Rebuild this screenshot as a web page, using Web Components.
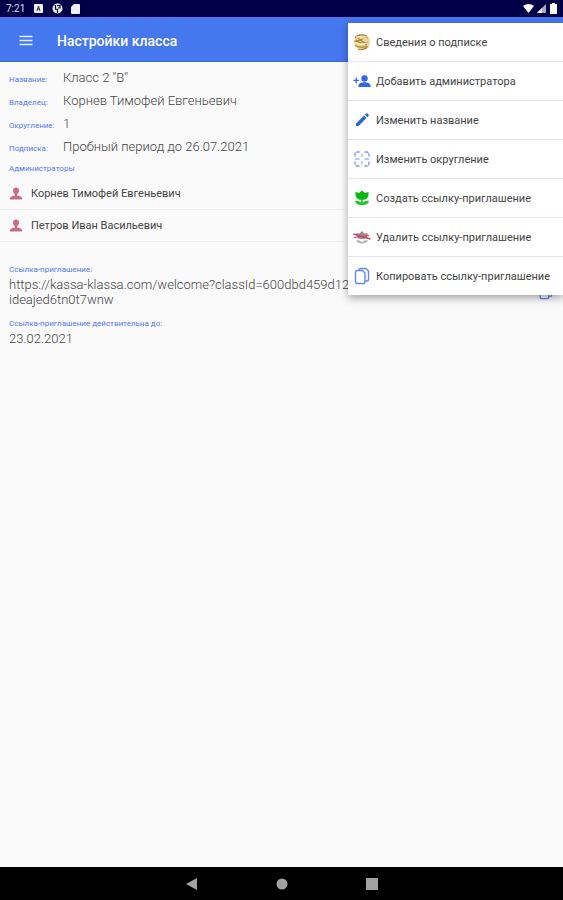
<!DOCTYPE html>
<html lang="ru">
<head>
<meta charset="utf-8">
<meta name="viewport" content="width=device-width, initial-scale=1">
<title>Настройки класса</title>
<style>
  html, body { height: 100%; }
  body { margin: 0; font-family: Roboto, "Noto Sans", sans-serif; background: #fafafa; color: #444; }
</style>
</head>
<body>
<class-settings></class-settings>
<script>
const icons = {
  user: '<svg viewBox="0 0 16 16" fill="#cc6b85"><path d="M8 1.500c1.800 0 3 1.300 3 3.100 0 1.600-.8 3-1.800 3.600v1.500H6.800V8.200C5.800 7.600 5 6.200 5 4.600 5 2.800 6.200 1.500 8 1.500zM2 13.500v-1.200c0-1.500 2.200-2.400 4.800-2.800h2.400c2.600.4 4.800 1.300 4.800 2.800v1.200z"/></svg>',
  gold: '<svg viewBox="0 0 18 18"><path d="M2 4q3-3 8-2.500L16 4l1 4-1 6-5 3-6-1-2-4-2-2z" fill="#ecd89d"/><path d="M2 5c4-5 9-3 12-2M1 8c5 2 9-5 14-3M3 7c5 6 8 1 13 4M2 12c5 5 10 0 13 2M5 16c4 2 7-1 9-1M5 5l9 7" fill="none" stroke="#b18632" stroke-width="1.300"/><path d="M2 9c5 4 9 0 14 2M3 4c4-1 6 2 11 1" fill="none" stroke="#fff6dc"/></svg>',
  add: '<svg viewBox="0 0 18 18" fill="#3467e4"><circle cx="11.500" cy="6.500" r="3.200"/><path d="M5.500 15v-1.500c0-2.200 3.500-3.200 6-3.200s6 1 6 3.200V15zM2.500 5.500h1.300v2.300H6v1.300H3.800v2.300H2.500V9.100H.5V7.800h2z"/></svg>',
  edit: '<svg viewBox="0 0 18 18" fill="#2865dc"><path d="M3 15v-2.500l8-8L13.500 7l-8 8zM11.800 3.700l1.200-1.200q.7-.6 1.400 0l1.100 1.100q.6.7 0 1.400l-1.200 1.200z"/></svg>',
  round: '<svg viewBox="0 0 18 18" fill="none" stroke="#7796ec" stroke-width="1.300"><path d="M2 6.500V4.500Q2 2 4.500 2h2M11.500 2h2Q16 2 16 4.500v2M16 11.500v2q0 2.500-2.500 2.500h-2M6.500 16h-2Q2 16 2 13.500v-2" stroke-dasharray="4 .7"/><path d="M9 3.500v3.500M9 11v3.500M2 9h4.500M11.500 9H16" stroke="#a3b8f3"/></svg>',
  tulip: '<svg viewBox="0 0 18 18"><path d="M2.500 3l3.500 1L9 1.500 12 4l3.500-1C16 8 14 11 9 11S2 8 2.500 3z" fill="#08b80d"/><path d="M8.200 10h1.600v4H8.200zM2 12c3-.5 5 .5 7 2.500 2-2 4-3 7-2.500-1 3-3 4-7 4s-6-1-7-4z" fill="#16c725"/></svg>',
  remove: '<svg viewBox="0 0 18 18"><path d="M3.500 5l3 .5L9 3l2.500 2.500 3-.5c.5 4-1 6-5.500 6S3 9 3.500 5z" fill="#a18b8d"/><path d="M3 12.500c3-.7 4 0 6 1.500 2-1.500 3-2.200 6-1.500-1 2-3 3-6 3s-5-1-6-3z" fill="#b5b5b5"/><path d="M.5 6l17 5" stroke="#cf4566" stroke-width="1.600"/><path d="M1 9.500l15-2" stroke="#cf4566"/></svg>',
  copy: '<svg viewBox="0 0 18 18" fill="none" stroke="#6488ec" stroke-width="1.400"><path d="M6 3.500V3q0-1.500 1.500-1.500H13l2.500 2.500v8.500q0 1.500-1.500 1.500h-2M2.500 5q0-1.500 1.500-1.500h5.500L12 6v9q0 1.500-1.500 1.500H4q-1.500 0-1.500-1.500z"/></svg>'
};

function define(name, markup) {
  customElements.define(name, class extends HTMLElement {
    constructor() {
      super();
      const root = this.attachShadow({ mode: 'open' });
      root.innerHTML = typeof markup === 'function' ? markup(this) : markup;
    }
  });
}

define('ui-icon', el => `<style>
  :host { display: inline-flex; flex: none; width: 18px; height: 18px; }
  svg { width: 100%; height: 100%; }
</style>${icons[el.getAttribute('name')] || ''}`);

define('status-bar', `<style>
  :host { display: flex; align-items: center; justify-content: space-between; box-sizing: border-box;
    height: 17px; padding: 0 5px 0 6px; background: #010046; color: #dcdcea; font-size: 10px; }
  div { display: flex; align-items: center; gap: 8px; }
  .right { gap: 2px; }
  svg { width: 11px; height: 11px; }
  svg.small { width: 9px; }
</style>
<div><span>7:21</span>
  <svg viewBox="0 0 11 11"><rect x="1" y="1" width="9" height="9" rx="1" fill="#eee"/><path d="M4 8l1.500-5L7 8M4 6h3" fill="none" stroke="#334"/></svg>
  <svg viewBox="0 0 11 11"><circle cx="5.500" cy="5.500" r="5" fill="#eee"/><path d="M3.500 2v4l2 .5V10M5 2.500h3V5H6" fill="none" stroke="#010046" stroke-width="1.200"/></svg>
  <svg class="small" viewBox="0 0 9 11"><path d="M3 1h5q1 0 1 1v8q0 1-1 1H1q-1 0-1-1V4z" fill="#eee"/></svg>
</div>
<div class="right">
  <svg viewBox="0 0 11 11"><path d="M0 3q5.500-4 11 0L5.500 10z" fill="#fff"/></svg>
  <svg viewBox="0 0 11 11"><path d="M1 10L10 1v9z" fill="#aaaac4"/><path d="M1 10l5-5v5z" fill="#fff"/></svg>
  <svg class="small" viewBox="0 0 9 11"><path d="M3 0h3v1h2v10H1V1h2z" fill="#fff"/></svg>
</div>`);

define('app-bar', `<style>
  :host { display: flex; align-items: center; gap: 22px; box-sizing: border-box; height: 45px;
    padding: 3px 17px 0; background: #4577ee; border-bottom: 1px solid #3c69df; color: #fff; }
  button { display: flex; width: 18px; height: 18px; padding: 0; border: 0; background: none; }
  svg { width: 18px; height: 18px; }
  h1 { margin: 0; font-size: 14px; line-height: 18px; font-weight: 500; }
</style>
<button aria-label="Меню"><svg viewBox="0 0 18 18" fill="none" stroke="#e8eefe" stroke-width="1.500"><path d="M2.500 4.500h13M2.500 8.500h13M2.500 12.500h13"/></svg></button>
<h1><slot></slot></h1>`);

define('info-row', `<style>
  :host { display: grid; grid-template-columns: 54px 1fr; align-items: baseline; height: 23px;
    line-height: 23px; font-size: 13px; font-weight: 300; }
  ::slotted([slot=label]) { color: #5578f2; font-size: 8px; font-weight: 400; }
</style><slot name="label"></slot><span><slot></slot></span>`);

define('info-block', `<style>
  :host { display: block; font-size: 13px; line-height: 15px; font-weight: 300; }
  .label { color: #5578f2; font-size: 8px; line-height: 14px; font-weight: 400; }
  .value { display: flex; align-items: center; justify-content: space-between; }
</style><div class="label"><slot name="label"></slot></div><div class="value"><slot></slot></div>`);

define('admin-row', `<style>
  :host { display: flex; align-items: center; gap: 7px; box-sizing: border-box; height: 32px; padding: 0 8px;
    border-bottom: 1px solid #eceef6; font-size: 11px; }
  ui-icon { width: 16px; height: 16px; }
</style><ui-icon name="user"></ui-icon><span><slot></slot></span>`);

define('menu-item', el => `<style>
  :host { display: block; }
  :host(:not(:last-child)) { border-bottom: 1px solid #e2e5f8; }
  button { display: flex; align-items: center; gap: 5px; width: 100%; height: 38px; padding: 0 13px 0 5px;
    border: 0; background: none; color: #444; font: inherit; text-align: left; white-space: nowrap; }
</style><button role="menuitem"><ui-icon name="${el.getAttribute('icon')}"></ui-icon><span><slot></slot></span></button>`);

define('popup-menu', `<style>
  :host { display: block; background: #fff; font-size: 11px; box-shadow: 0 3px 8px rgba(0,0,0,.35); }
</style><slot></slot>`);

define('nav-bar', `<style>
  :host { display: flex; align-items: center; justify-content: center; gap: 74px; height: 33px; background: #000; }
  button { display: flex; width: 16px; height: 16px; padding: 0; border: 0; background: none; }
  svg { width: 16px; height: 16px; fill: #a2a2a2; }
</style>
<button aria-label="Назад"><svg viewBox="0 0 16 16"><path d="M2 8l11-6v12z"/></svg></button>
<button aria-label="Домой"><svg viewBox="0 0 16 16"><circle cx="8" cy="8" r="5.500"/></svg></button>
<button aria-label="Недавние"><svg viewBox="0 0 16 16"><rect x="2" y="2" width="12" height="12" rx="1"/></svg></button>`);

define('class-settings', `<style>
  :host { display: flex; flex-direction: column; min-height: 100%; position: relative; }
  main { flex: 1; }
  .info { padding: 4px 9px 0; }
  .caption { padding: 2px 9px 0; color: #5578f2; font-size: 8px; line-height: 18px; }
  .links { display: grid; gap: 10px; padding: 21px 9px 0; }
  .copy { display: flex; width: 16px; height: 16px; padding: 0; border: 0; background: none; }
  .copy ui-icon { width: 16px; height: 16px; }
  popup-menu { position: absolute; top: 23px; right: 0; }
</style>
<status-bar></status-bar>
<app-bar>Настройки класса</app-bar>
<main>
  <section class="info">
    <info-row><span slot="label">Название:</span>Класс 2 "В"</info-row>
    <info-row><span slot="label">Владелец:</span>Корнев Тимофей Евгеньевич</info-row>
    <info-row><span slot="label">Округление:</span>1</info-row>
    <info-row><span slot="label">Подписка:</span>Пробный период до 26.07.2021</info-row>
  </section>
  <div class="caption">Администраторы</div>
  <section>
    <admin-row>Корнев Тимофей Евгеньевич</admin-row>
    <admin-row>Петров Иван Васильевич</admin-row>
  </section>
  <section class="links">
    <info-block><span slot="label">Ссылка-приглашение:</span>
      <span>https://kassa-klassa.com/welcome?classId=600dbd459d12<br>ideajed6tn0t7wnw</span>
      <button class="copy" aria-label="Копировать"><ui-icon name="copy"></ui-icon></button>
    </info-block>
    <info-block><span slot="label">Ссылка-приглашение действительна до:</span>23.02.2021</info-block>
  </section>
</main>
<nav-bar></nav-bar>
<popup-menu role="menu">
  <menu-item icon="gold">Сведения о подписке</menu-item>
  <menu-item icon="add">Добавить администратора</menu-item>
  <menu-item icon="edit">Изменить название</menu-item>
  <menu-item icon="round">Изменить округление</menu-item>
  <menu-item icon="tulip">Создать ссылку-приглашение</menu-item>
  <menu-item icon="remove">Удалить ссылку-приглашение</menu-item>
  <menu-item icon="copy">Копировать ссылку-приглашение</menu-item>
</popup-menu>`);
</script>
</body>
</html>
